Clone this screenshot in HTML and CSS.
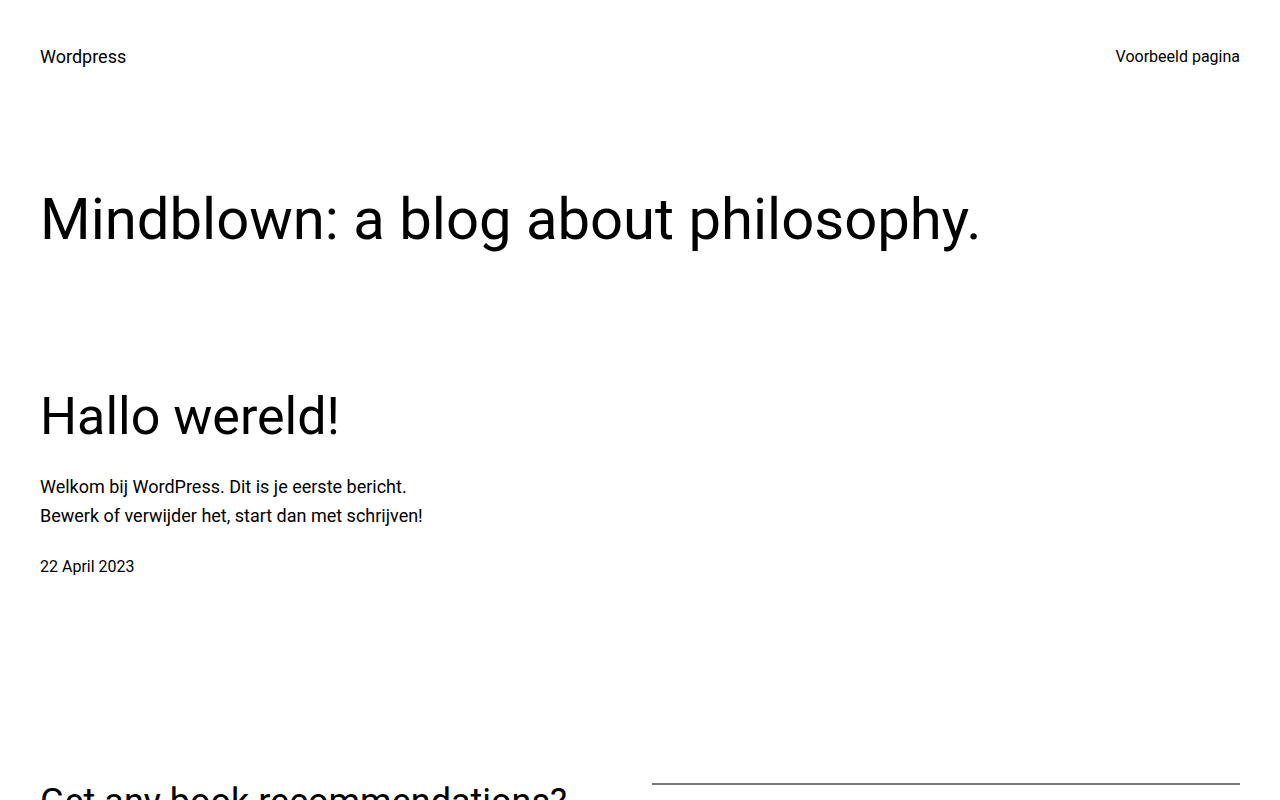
FILE: index.html
```html
<!DOCTYPE html>
<html lang="nl">
<head>
<meta charset="utf-8">
<title>Wordpress</title>
<link rel="stylesheet" href="styles.css">
</head>
<body>
<header class="site-header">
  <a class="site-title" href="#">Wordpress</a>
  <nav class="site-nav"><a href="#">Voorbeeld pagina</a></nav>
</header>
<main class="site-main">
  <h1 class="page-title">Mindblown: a blog about philosophy.</h1>
  <article class="post">
    <h2 class="post-title">Hallo wereld!</h2>
    <p class="post-excerpt">Welkom bij WordPress. Dit is je eerste bericht.<br>Bewerk of verwijder het, start dan met schrijven!</p>
    <p class="post-date">22 April 2023</p>
  </article>
  <section class="cta">
    <h2 class="cta-title">Get any book recommendations?</h2>
    <div class="cta-side"><hr class="cta-rule"></div>
  </section>
</main>
</body>
</html>
```
FILE: styles.css
```css
html, body {
  margin: 0;
  padding: 0;
  background: #ffffff;
  color: #000000;
  font-family: Roboto, "Liberation Sans", sans-serif;
}
a { color: inherit; text-decoration: none; }

.site-header {
  display: flex;
  justify-content: space-between;
  align-items: center;
  padding: 44px 40px 0;
  height: 24px;
}
.site-title { font-size: 18px; }
.site-nav { font-size: 16px; }

.site-main { padding: 0 40px; }

.page-title {
  margin: 117px 0 0;
  font-size: 58px;
  font-weight: 400;
  line-height: 1.2;
}

.post { margin-top: 131px; }
.post-title {
  margin: 0;
  font-size: 52px;
  font-weight: 400;
  line-height: 1.2;
}
.post-excerpt {
  margin: 24px 0 0;
  font-size: 18px;
  line-height: 29px;
}
.post-date {
  margin: 27px 0 0;
  font-size: 16px;
}

.cta {
  margin-top: 207px;
  display: grid;
  grid-template-columns: 1fr 1fr;
  gap: 24px;
}
.cta-title {
  margin: 0;
  font-size: 36px;
  font-weight: 400;
  line-height: 1.1;
}
.cta-rule {
  margin: 0;
  border: 0;
  border-top: 2px solid #777777;
}
```
